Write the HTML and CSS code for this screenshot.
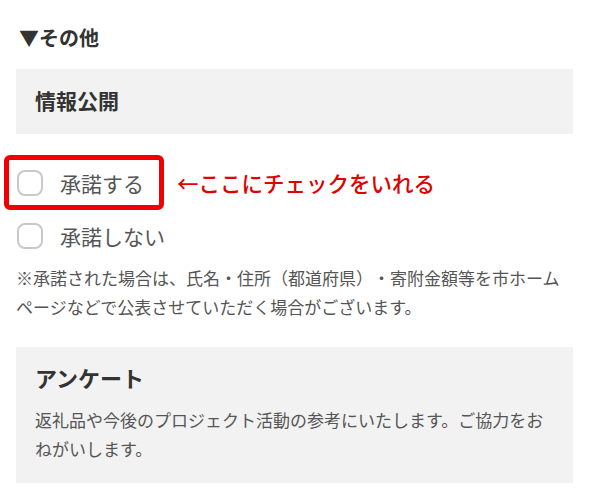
FILE: index.html
```html
<!DOCTYPE html>
<html lang="ja">
<head>
<meta charset="utf-8">
<link rel="stylesheet" href="styles.css">
</head>
<body>
<div class="page">
  <div class="section-title">▼その他</div>
  <div class="panel panel-head">
    <div class="panel-title">情報公開</div>
  </div>
  <div class="options">
    <div class="option">
      <span class="highlight"></span>
      <span class="check"></span>
      <span class="label">承諾する</span>
      <span class="annotation">←ここにチェックをいれる</span>
    </div>
    <div class="option">
      <span class="check"></span>
      <span class="label">承諾しない</span>
    </div>
  </div>
  <p class="note">※承諾された場合は、氏名・住所（都道府県）・寄附金額等を市ホーム<br>ページなどで公表させていただく場合がございます。</p>
  <div class="panel panel-survey">
    <div class="panel-title survey-title">アンケート</div>
    <p class="panel-text">返礼品や今後のプロジェクト活動の参考にいたします。ご協力をお<br>ねがいします。</p>
  </div>
</div>
</body>
</html>
```
FILE: styles.css
```css
html, body {
  margin: 0;
  padding: 0;
  background: #fff;
}
body {
  font-family: "Noto Sans CJK JP", "Noto Sans", sans-serif;
  color: #333;
  text-spacing-trim: space-all;
}
.page {
  width: 557px;
  margin-left: 16px;
  padding-top: 23px;
}
.section-title {
  font-size: 20px;
  font-weight: bold;
  line-height: 30px;
  color: #333;
  padding-left: 3px;
}
.panel {
  background: #f2f2f2;
  box-sizing: border-box;
  padding-left: 19px;
  padding-right: 19px;
}
.panel-head {
  margin-top: 16px;
  height: 65px;
  padding-top: 16px;
}
.panel-title {
  font-size: 21px;
  font-weight: bold;
  line-height: 30px;
  color: #333;
}
.options {
  margin-top: 23px;
}
.option {
  position: relative;
  display: flex;
  align-items: center;
  height: 52.5px;
}
.check {
  width: 26px;
  height: 26px;
  box-sizing: border-box;
  border: 2px solid #c9c9c9;
  border-radius: 8px;
  background: #fff;
  margin-left: 1px;
  flex: none;
}
.label {
  font-size: 21px;
  color: #555;
  margin-left: 17px;
  line-height: 30px;
}
.highlight {
  position: absolute;
  left: -12px;
  top: -2px;
  width: 160px;
  height: 55px;
  box-sizing: border-box;
  border: 5px solid #f20000;
  border-radius: 6px;
}
.annotation {
  font-size: 21.5px;
  font-weight: 500;
  color: #e00000;
  margin-left: 33px;
  line-height: 30px;
}
.note {
  margin: 1px 0 0 0;
  font-size: 17px;
  line-height: 29px;
  color: #555;
  white-space: nowrap;
}
.panel-survey {
  margin-top: 26px;
  padding-top: 14px;
  padding-bottom: 20px;
}
.survey-title {
  font-size: 22px;
  line-height: 32px;
}
.panel-text {
  margin: 12px 0 0 0;
  font-size: 17px;
  line-height: 29px;
  color: #555;
}
```
